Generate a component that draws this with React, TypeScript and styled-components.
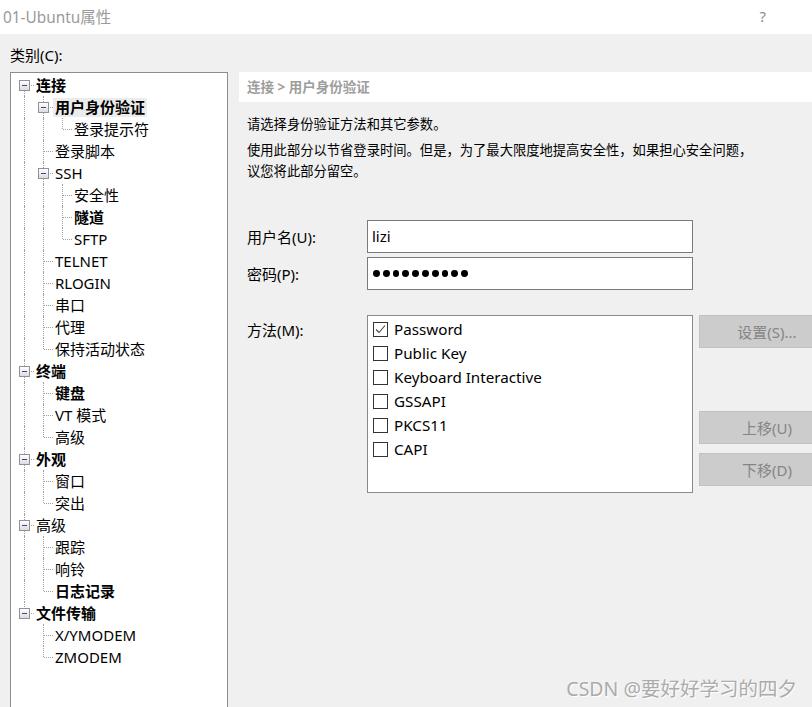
import React from "react";
import styled, { createGlobalStyle } from "styled-components";

const GlobalStyle = createGlobalStyle`
  html, body {
    margin: 0;
    padding: 0;
    background: #f0f0f0;
    overflow: hidden;
  }
  body {
    font-family: "Noto Sans", "Noto Sans CJK SC", sans-serif;
  }
`;

const Window = styled.div`
  position: relative;
  width: 812px;
  height: 707px;
  overflow: hidden;
  background: #f0f0f0;
  color: #000;
`;

const TitleBar = styled.div`
  height: 34px;
  box-sizing: border-box;
  background: #fff;
  display: flex;
  align-items: center;
  justify-content: space-between;
  padding: 0 46px 2px 3px;
  font-size: 15.4px;
  color: #9a9a9a;
`;

const Help = styled.span`
  font-size: 15px;
  color: #8c8c8c;
`;

const Body = styled.div`
  display: flex;
  align-items: flex-start;
`;

const LeftPane = styled.div`
  width: 228px;
  flex-shrink: 0;
  box-sizing: border-box;
  padding: 10px 0 0 10px;
`;

const CategoryLabel = styled.div`
  font-size: 15px;
  line-height: 22px;
  margin-bottom: 6px;
`;

const TreeBox = styled.div`
  width: 218px;
  height: 660px;
  box-sizing: border-box;
  border: 1px solid #8c8c8c;
  background: #fff;
  padding: 1px 0 0 4px;
`;

const TreeRow = styled.div`
  display: flex;
  align-items: center;
  height: 22px;
`;

const Guide = styled.span<{ $line: boolean }>`
  position: relative;
  width: 19px;
  height: 22px;
  flex-shrink: 0;
  &::before {
    content: "";
    display: ${(p) => (p.$line ? "block" : "none")};
    position: absolute;
    left: 9px;
    top: 0;
    bottom: 0;
    border-left: 1px dotted #a0a0a0;
  }
`;

const Connector = styled.span<{ $up: boolean; $down: boolean }>`
  position: relative;
  width: 19px;
  height: 22px;
  flex-shrink: 0;
  &::before {
    content: "";
    position: absolute;
    left: 9px;
    top: ${(p) => (p.$up ? "0" : "11px")};
    bottom: ${(p) => (p.$down ? "0" : "11px")};
    border-left: 1px dotted #a0a0a0;
  }
  &::after {
    content: "";
    position: absolute;
    left: 10px;
    right: 0;
    top: 11px;
    border-top: 1px dotted #a0a0a0;
  }
`;

const Expander = styled.span`
  position: absolute;
  z-index: 1;
  left: 4px;
  top: 6px;
  width: 11px;
  height: 11px;
  box-sizing: border-box;
  border: 1px solid #929292;
  background: linear-gradient(#ffffff, #dcdcdc);
  display: flex;
  align-items: center;
  justify-content: center;
  &::after {
    content: "";
    width: 5px;
    height: 1px;
    background: #2b4c9b;
  }
`;

const NodeLabel = styled.span<{ $bold?: boolean; $selected?: boolean }>`
  font-size: 15px;
  line-height: 19px;
  padding: 0 2px;
  white-space: nowrap;
  font-weight: ${(p) => (p.$bold ? 700 : 400)};
  background: ${(p) => (p.$selected ? "#ececec" : "transparent")};
`;

const RightPane = styled.div`
  flex: 1;
  min-width: 0;
  margin: 38px 0 0 11px;
`;

const Crumb = styled.div`
  height: 30px;
  line-height: 30px;
  background: #fff;
  padding-left: 8px;
  font-size: 13.5px;
  font-weight: 700;
  color: #9d9d9d;
  white-space: nowrap;
`;

const Content = styled.div`
  padding-left: 8px;
`;

const Intro = styled.div`
  margin-top: 11.5px;
  font-size: 13.3px;
  line-height: 21px;
  white-space: nowrap;
`;

const Note = styled.div`
  margin-top: 5px;
  font-size: 13.3px;
  line-height: 21px;
  white-space: nowrap;
`;

const Fields = styled.div`
  margin-top: 38.5px;
`;

const FieldRow = styled.div`
  display: flex;
  align-items: center;
  & + & {
    margin-top: 4px;
  }
`;

const FieldLabel = styled.div`
  width: 120px;
  flex-shrink: 0;
  font-size: 15px;
  line-height: 22px;
`;

const TextBox = styled.div`
  width: 326px;
  height: 33px;
  box-sizing: border-box;
  border: 1px solid #7a7a7a;
  background: #fff;
  padding: 0 4px 2px;
  display: flex;
  align-items: center;
  font-size: 15px;
  flex-shrink: 0;
`;

const Dots = styled.div`
  display: flex;
  gap: 3px;
  padding: 2px 0 0 1px;
`;

const Dot = styled.span`
  width: 6.8px;
  height: 6.8px;
  border-radius: 50%;
  background: #000;
`;

const MethodRow = styled.div`
  display: flex;
  align-items: flex-start;
  margin-top: 25px;
`;

const MethodLabel = styled(FieldLabel)`
  padding-top: 4px;
`;

const ListBox = styled.div`
  width: 326px;
  height: 178px;
  flex-shrink: 0;
  box-sizing: border-box;
  border: 1px solid #8a8a8a;
  background: #fff;
  padding: 1px 0 0 5px;
`;

const CheckRow = styled.div`
  height: 24px;
  display: flex;
  align-items: center;
  gap: 6px;
  font-size: 15.2px;
  white-space: nowrap;
`;

const CheckBox = styled.span`
  width: 15px;
  height: 15px;
  box-sizing: border-box;
  border: 1px solid #333;
  background: #fff;
  display: flex;
  align-items: center;
  justify-content: center;
  flex-shrink: 0;
`;

const ButtonColumn = styled.div`
  display: flex;
  flex-direction: column;
  margin-left: 6px;
`;

const GrayButton = styled.div<{ $offset: number }>`
  width: 136px;
  height: 33px;
  box-sizing: border-box;
  margin-top: ${(p) => p.$offset}px;
  background: #cccccc;
  border: 1px solid #c2c2c2;
  color: #858585;
  font-size: 15px;
  display: flex;
  align-items: center;
  justify-content: center;
  flex-shrink: 0;
`;

const Watermark = styled.div`
  position: absolute;
  right: 15px;
  bottom: 5px;
  font-size: 19.5px;
  color: #ababab;
  text-shadow: 1px 1px 0 #fff;
  white-space: nowrap;
`;

type TreeNode = {
  label: string;
  bold?: boolean;
  selected?: boolean;
  children?: TreeNode[];
};

type FlatRow = {
  node: TreeNode;
  guides: boolean[];
  up: boolean;
  down: boolean;
};

const tree: TreeNode[] = [
  {
    label: "连接",
    bold: true,
    children: [
      {
        label: "用户身份验证",
        bold: true,
        selected: true,
        children: [{ label: "登录提示符" }],
      },
      { label: "登录脚本" },
      {
        label: "SSH",
        children: [{ label: "安全性" }, { label: "隧道", bold: true }, { label: "SFTP" }],
      },
      { label: "TELNET" },
      { label: "RLOGIN" },
      { label: "串口" },
      { label: "代理" },
      { label: "保持活动状态" },
    ],
  },
  {
    label: "终端",
    bold: true,
    children: [{ label: "键盘", bold: true }, { label: "VT 模式" }, { label: "高级" }],
  },
  {
    label: "外观",
    bold: true,
    children: [{ label: "窗口" }, { label: "突出" }],
  },
  {
    label: "高级",
    children: [{ label: "跟踪" }, { label: "响铃" }, { label: "日志记录", bold: true }],
  },
  {
    label: "文件传输",
    bold: true,
    children: [{ label: "X/YMODEM" }, { label: "ZMODEM" }],
  },
];

const flatten = (nodes: TreeNode[], guides: boolean[], out: FlatRow[]) => {
  nodes.forEach((node, i) => {
    const last = i === nodes.length - 1;
    out.push({ node, guides, up: guides.length > 0 || i > 0, down: !last });
    if (node.children) flatten(node.children, [...guides, !last], out);
  });
  return out;
};

const rows = flatten(tree, [], []);

const methods = [
  { name: "Password", checked: true },
  { name: "Public Key" },
  { name: "Keyboard Interactive" },
  { name: "GSSAPI" },
  { name: "PKCS11" },
  { name: "CAPI" },
];

const Check = () => (
  <svg width="13" height="13" viewBox="0 0 13 13">
    <polyline points="2,6.5 5,9.5 11,2.5" fill="none" stroke="#444" strokeWidth="1.1" />
  </svg>
);

export default function App() {
  return (
    <Window>
      <GlobalStyle />
      <TitleBar>
        <span>01-Ubuntu属性</span>
        <Help>?</Help>
      </TitleBar>
      <Body>
        <LeftPane>
          <CategoryLabel>类别(C):</CategoryLabel>
          <TreeBox>
            {rows.map((row, i) => (
              <TreeRow key={i}>
                {row.guides.map((g, j) => (
                  <Guide key={j} $line={g} />
                ))}
                <Connector $up={row.up} $down={row.down}>
                  {row.node.children && <Expander />}
                </Connector>
                <NodeLabel $bold={row.node.bold} $selected={row.node.selected}>
                  {row.node.label}
                </NodeLabel>
              </TreeRow>
            ))}
          </TreeBox>
        </LeftPane>
        <RightPane>
          <Crumb>连接 &gt; 用户身份验证</Crumb>
          <Content>
            <Intro>请选择身份验证方法和其它参数。</Intro>
            <Note>
              <div>使用此部分以节省登录时间。但是，为了最大限度地提高安全性，如果担心安全问题，</div>
              <div>议您将此部分留空。</div>
            </Note>
            <Fields>
              <FieldRow>
                <FieldLabel>用户名(U):</FieldLabel>
                <TextBox>lizi</TextBox>
              </FieldRow>
              <FieldRow>
                <FieldLabel>密码(P):</FieldLabel>
                <TextBox>
                  <Dots>
                    {Array.from({ length: 10 }).map((_, i) => (
                      <Dot key={i} />
                    ))}
                  </Dots>
                </TextBox>
              </FieldRow>
            </Fields>
            <MethodRow>
              <MethodLabel>方法(M):</MethodLabel>
              <ListBox>
                {methods.map((m) => (
                  <CheckRow key={m.name}>
                    <CheckBox>{m.checked && <Check />}</CheckBox>
                    {m.name}
                  </CheckRow>
                ))}
              </ListBox>
              <ButtonColumn>
                <GrayButton $offset={0}>设置(S)...</GrayButton>
                <GrayButton $offset={63}>上移(U)</GrayButton>
                <GrayButton $offset={9}>下移(D)</GrayButton>
              </ButtonColumn>
            </MethodRow>
          </Content>
        </RightPane>
      </Body>
      <Watermark>CSDN @要好好学习的四夕</Watermark>
    </Window>
  );
}
